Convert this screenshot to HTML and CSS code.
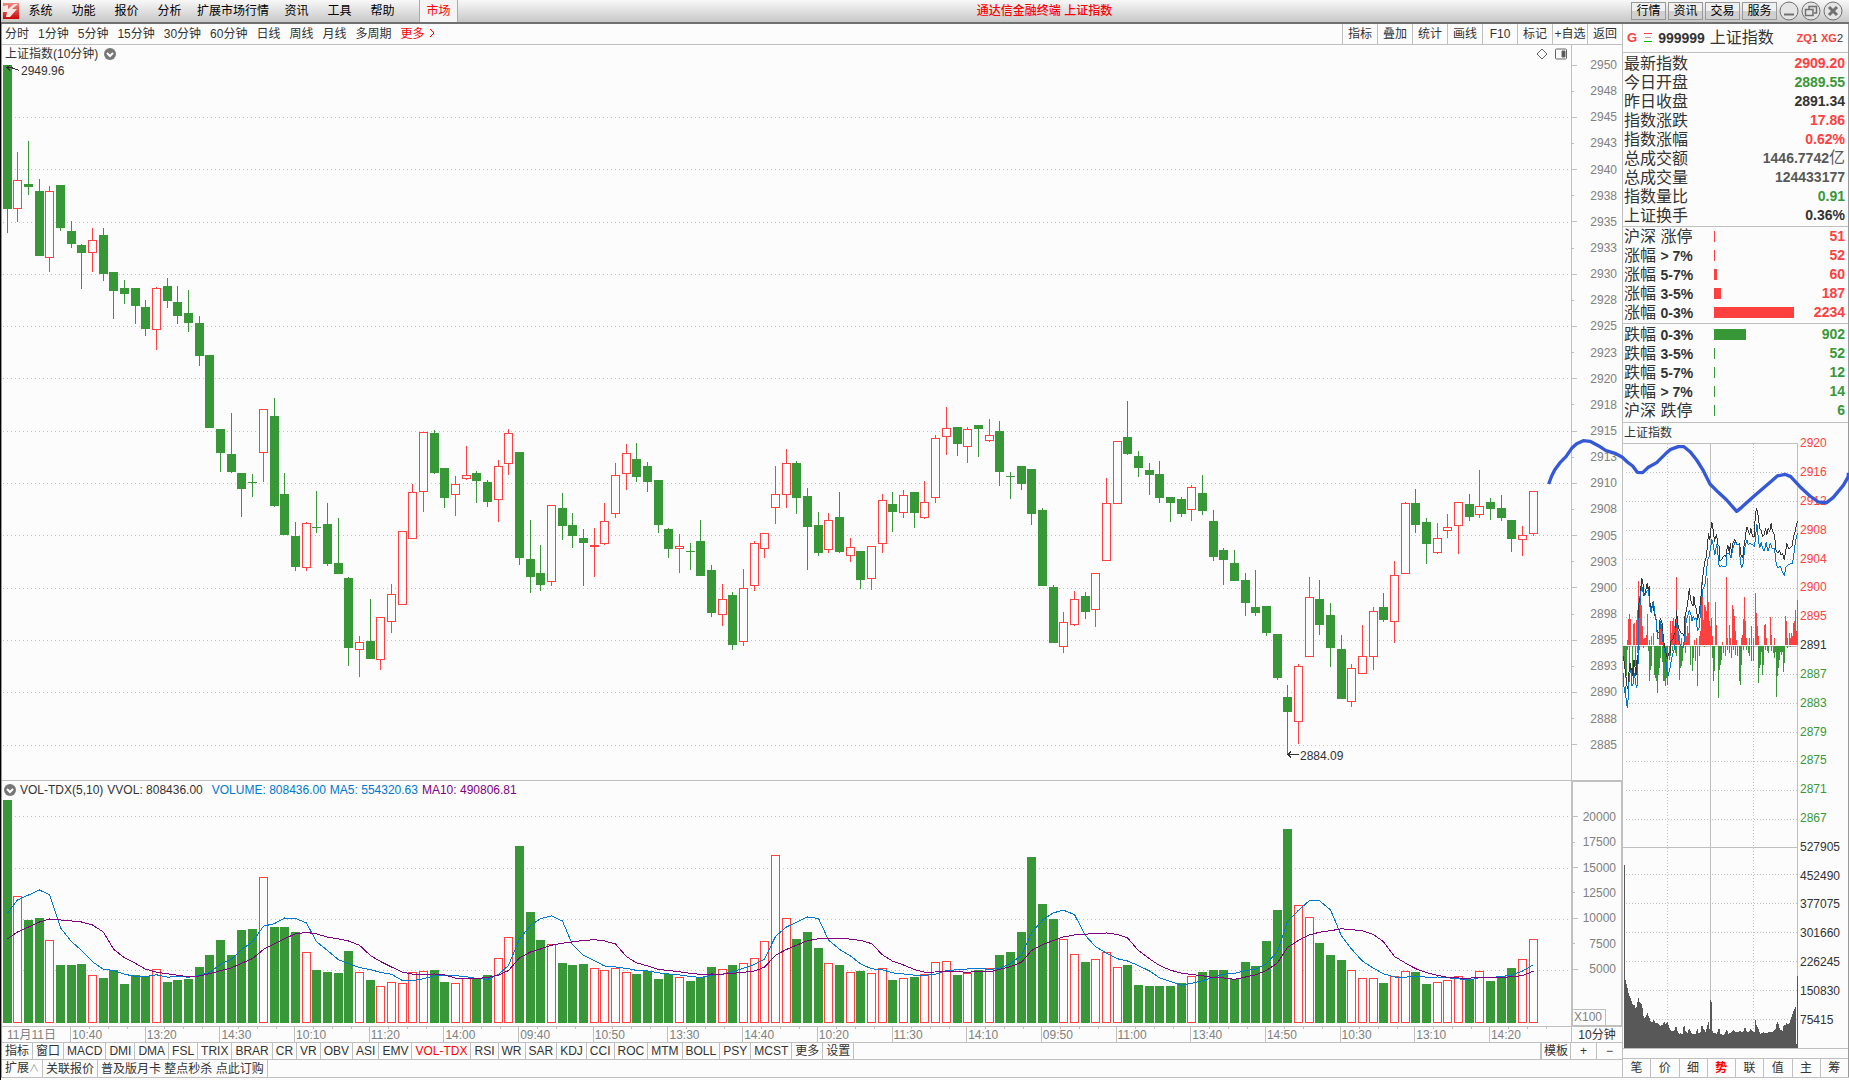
FILE: index.html
```
<!DOCTYPE html>
<html lang="zh-CN">
<head>
  <meta charset="UTF-8">
  <meta name="viewport" content="width=device-width, initial-scale=1.0">
  <title>通达信金融终端 上证指数</title>
  <link rel="stylesheet" href="styles.css">
</head>
<body>
<header class="menubar">
  <svg class="logo" viewBox="0 0 16 16">
    <defs>
      <linearGradient id="logoRed" x1="0" y1="0" x2="0" y2="1">
        <stop offset="0" stop-color="#f08a80"/>
        <stop offset="1" stop-color="#c80808"/>
      </linearGradient>
    </defs>
    <rect width="16" height="16" fill="url(#logoRed)"/>
    <path d="M0 3 L5 2 L5 6 L11 1 L15 1 L9 6 L14 6 L7 14 L3 14 L4 9 L0 9 Z" fill="#f3e4e2"/>
  </svg>
  <nav class="menu">
    <button>系统</button>
    <button>功能</button>
    <button>报价</button>
    <button>分析</button>
    <button>扩展市场行情</button>
    <button>资讯</button>
    <button>工具</button>
    <button>帮助</button>
    <button class="market">市场</button>
  </nav>
  <h1>通达信金融终端 上证指数</h1>
  <div class="window-tools">
    <button class="tool">行情</button>
    <button class="tool">资讯</button>
    <button class="tool">交易</button>
    <button class="tool">服务</button>
    <button class="round" aria-label="最小化"><svg viewBox="0 0 20 20"><circle cx="10" cy="10" r="9"/><path d="M5 13.5h10" stroke-width="2"/></svg></button>
    <button class="round" aria-label="还原"><svg viewBox="0 0 20 20"><circle cx="10" cy="10" r="9"/><path d="M8 8V5.5h7.5V12H13M4.5 8.500h7.500v6h-7.500z" stroke-width="1.500"/></svg></button>
    <button class="round" aria-label="关闭"><svg viewBox="0 0 20 20"><circle cx="10" cy="10" r="9"/><path d="M6 6l8 8M14 6l-8 8" stroke-width="3"/></svg></button>
  </div>
</header>

<main class="workspace">
  <section class="chart-side">
    <div class="period-bar">
      <div class="periods">
        <button>分时</button>
        <button>1分钟</button>
        <button>5分钟</button>
        <button>15分钟</button>
        <button>30分钟</button>
        <button>60分钟</button>
        <button>日线</button>
        <button>周线</button>
        <button>月线</button>
        <button>多周期</button>
        <button class="more">更多<svg viewBox="0 0 6 10"><path d="M1 1l4 4-4 4"/></svg></button>
      </div>
      <div class="period-tools">
        <button>指标</button>
        <button>叠加</button>
        <button>统计</button>
        <button>画线</button>
        <button>F10</button>
        <button>标记</button>
        <button>+自选</button>
        <button>返回</button>
      </div>
    </div>

    <div class="charts">
      <div class="plots">
        <div class="plot-head">
          <span>上证指数(10分钟)</span>
          <svg class="fold" viewBox="0 0 12 12"><circle cx="6" cy="6" r="6"/><path d="M3 5l3 3 3-3"/></svg>
          <svg class="corner" viewBox="0 0 32 12">
            <path d="M6 1l5 5-5 5-5-5z"/>
            <rect x="19.500" y="1" width="11" height="10" rx="1"/>
            <path d="M26 3h3v6h-3z" fill="#555"/>
          </svg>
        </div>
        <svg class="price-plot" id="pricePlot" viewBox="2 63 1569 717" preserveAspectRatio="none"></svg>
        <div class="plot-head vol-head">
          <svg class="fold" viewBox="0 0 12 12"><circle cx="6" cy="6" r="6"/><path d="M3 5l3 3 3-3"/></svg>
          <span>VOL-TDX(5,10)</span>
          <span class="vvol">VVOL: 808436.00</span>
          <span class="blue">VOLUME: 808436.00</span>
          <span class="blue">MA5: 554320.63</span>
          <span class="purple">MA10: 490806.81</span>
        </div>
        <svg class="vol-plot" id="volPlot" viewBox="2 798 1569 228" preserveAspectRatio="none"></svg>
      </div>
      <div class="axis">
        <ul class="axis-price" id="priceAxis"></ul>
        <div class="axis-vol">
          <ul id="volAxis"></ul>
          <span class="unit">X100</span>
        </div>
      </div>
    </div>

    <div class="time-row">
      <ol class="times" id="times"></ol>
      <span class="period-now">10分钟</span>
    </div>

    <div class="tab-row">
      <div class="tabs">
        <button>指标</button><button>窗口</button><button>MACD</button><button>DMI</button><button>DMA</button><button>FSL</button><button>TRIX</button><button>BRAR</button><button>CR</button><button>VR</button><button>OBV</button><button>ASI</button><button>EMV</button><button class="on">VOL-TDX</button><button>RSI</button><button>WR</button><button>SAR</button><button>KDJ</button><button>CCI</button><button>ROC</button><button>MTM</button><button>BOLL</button><button>PSY</button><button>MCST</button><button>更多</button><button>设置</button>
      </div>
      <div class="zoom">
        <button class="tpl">模板</button><button>+</button><button>−</button>
      </div>
    </div>
    <div class="tab-row link-row">
      <div class="tabs">
        <button>扩展<small>∧</small></button><button>关联报价</button><button>普及版月卡 整点秒杀 点此订购</button>
      </div>
    </div>
  </section>

  <aside class="quote-side">
    <h2 class="quote-title">
      <b class="flag">G</b>
      <svg viewBox="0 0 8 10"><path d="M0 .5h8" stroke="#ff4040"/><path d="M1 4.500h6" stroke="#aaa"/><path d="M0 8.500h8" stroke="#00c000"/></svg>
      <b class="code">999999</b>
      <span class="name">上证指数</span>
      <span class="marks"><b>ZQ</b>1 <b>XG</b>2</span>
    </h2>
    <table class="quote">
      <tr><th>最新指数</th><td class="up">2909.20</td></tr>
      <tr><th>今日开盘</th><td class="down">2889.55</td></tr>
      <tr><th>昨日收盘</th><td>2891.34</td></tr>
      <tr><th>指数涨跌</th><td class="up">17.86</td></tr>
      <tr><th>指数涨幅</th><td class="up">0.62%</td></tr>
      <tr><th>总成交额</th><td class="dim">1446.7742<span>亿</span></td></tr>
      <tr><th>总成交量</th><td class="dim">124433177</td></tr>
      <tr><th>指数量比</th><td class="down">0.91</td></tr>
      <tr><th>上证换手</th><td>0.36%</td></tr>
    </table>
    <table class="quote spread up">
      <tr><th>沪深 涨停</th><td><i style="width:1px"></i></td><td>51</td></tr>
      <tr><th>涨幅 <b>&gt; 7%</b></th><td><i style="width:1px"></i></td><td>52</td></tr>
      <tr><th>涨幅 <b>5-7%</b></th><td><i style="width:3px"></i></td><td>60</td></tr>
      <tr><th>涨幅 <b>3-5%</b></th><td><i style="width:7px"></i></td><td>187</td></tr>
      <tr><th>涨幅 <b>0-3%</b></th><td><i style="width:80px"></i></td><td>2234</td></tr>
    </table>
    <table class="quote spread down">
      <tr><th>跌幅 <b>0-3%</b></th><td><i style="width:32px"></i></td><td>902</td></tr>
      <tr><th>跌幅 <b>3-5%</b></th><td><i style="width:1px"></i></td><td>52</td></tr>
      <tr><th>跌幅 <b>5-7%</b></th><td><i style="width:1px"></i></td><td>12</td></tr>
      <tr><th>跌幅 <b>&gt; 7%</b></th><td><i style="width:1px"></i></td><td>14</td></tr>
      <tr><th>沪深 跌停</th><td><i style="width:1px"></i></td><td>6</td></tr>
    </table>
    <div class="mini">
      <div class="mini-main">
        <h3>上证指数</h3>
        <svg id="miniPlot" viewBox="246 69 528 1818" preserveAspectRatio="none"></svg>
      </div>
      <ul class="mini-axis" id="miniAxis"></ul>
    </div>
    <div class="quote-tabs">
      <button>笔</button><button>价</button><button>细</button><button class="on">势</button><button>联</button><button>值</button><button>主</button><button>筹</button>
    </div>
  </aside>

  <svg class="pen" viewBox="0 0 309 110">
    <polyline transform="scale(.3333)" points="26,192 35,168 44,150 60,128 78,110 95,85 110,71 130,62 150,64 175,77 198,92 225,100 247,112 262,126 278,138 292,157 308,158 325,142 350,128 375,103 392,88 415,80 432,80 450,95 470,120 490,152 510,192 535,217 560,240 580,263 590,274 605,262 640,230 680,196 712,168 735,163 752,170 780,200 810,228 835,246 860,248 880,232 910,196 925,170 925,158"/>
  </svg>
</main>
<script src="chart.js"></script>
</body>
</html>
```
FILE: styles.css
```
* {
  box-sizing: border-box;
}
body {
  display: flex;
  flex-direction: column;
  height: 100vh;
  margin: 0;
  overflow: hidden;
  background-color: #fcfcfc;
  border-left: 1px solid #000;
  color: #333;
  font-family: "Liberation Sans", "Noto Sans CJK SC", sans-serif;
  font-size: 12px;
  line-height: 16px;
}
button {
  padding: 0;
  border: none;
  background: none;
  color: inherit;
  font: inherit;
  white-space: nowrap;
  cursor: pointer;
}
ul, ol, h1, h2, h3 {
  margin: 0;
  padding: 0;
  list-style: none;
  font-size: 12px;
  font-weight: normal;
}

/* Menu bar */
.menubar {
  display: flex;
  flex: none;
  align-items: center;
  height: 24px;
  padding: 0 6px 0 2px;
  background: linear-gradient(#f8f8f8, #c8c8c8);
  border-bottom: 2px solid #707070;
  color: #000;
}
.logo {
  width: 16px;
  height: 16px;
}
.menu {
  display: flex;
  flex: none;
  align-self: stretch;
}
.menu button {
  min-width: 43px;
  padding: 0 6px;
}
.menu .market {
  min-width: 39px;
  margin-left: 15px;
  border: solid #aaa;
  border-width: 0 1px;
  background-color: #f4f4f4;
  color: #f00;
}
.menubar h1 {
  flex: 1;
  color: #f00;
  font-weight: 500;
  text-align: center;
}
.window-tools {
  display: flex;
  flex: none;
  align-items: center;
  gap: 2px;
}
.tool {
  width: 35px;
  height: 18px;
  border: 1px solid #999;
  background: linear-gradient(#f0f0f0 50%, #d0d0d0 50%);
  line-height: 16px;
}
.round {
  width: 20px;
  height: 20px;
}
.round svg {
  display: block;
  fill: #e4e4e4;
  stroke: #707070;
}

.workspace {
  position: relative;
  display: flex;
  flex: 1;
  min-height: 0;
  margin-bottom: 2px;
  border-left: 1px solid #999;
  border-bottom: 1px solid #c0c0c0;
}
.chart-side {
  display: flex;
  flex: 1;
  flex-direction: column;
  min-width: 0;
}

/* Period bar */
.period-bar {
  display: flex;
  flex: none;
  justify-content: space-between;
  height: 21px;
  border-bottom: 1px solid #c0c0c0;
}
.periods {
  display: flex;
  gap: 9px;
  padding-left: 3px;
}
.more {
  color: #f00;
}
.more svg {
  width: 6px;
  height: 10px;
  margin-left: 4px;
  fill: none;
  stroke: #f00;
}
.period-tools {
  display: flex;
}
.period-tools button {
  width: 35px;
  border-left: 1px solid #c0c0c0;
}

/* Charts */
.charts {
  display: flex;
  flex: 1;
  min-height: 0;
}
.plots {
  display: flex;
  flex: 1;
  flex-direction: column;
  min-width: 0;
}
.plot-head {
  display: flex;
  flex: none;
  align-items: center;
  gap: 6px;
  height: 18px;
  padding: 0 3px;
}
.vol-head {
  gap: 4px;
  padding: 0 2px;
  border-top: 1px solid #c0c0c0;
}
.vvol {
  margin-right: 5px;
}
.fold {
  width: 12px;
  height: 12px;
  fill: #777;
}
.fold path {
  fill: none;
  stroke: #fff;
  stroke-width: 2;
}
.corner {
  width: 32px;
  height: 12px;
  margin-left: auto;
  fill: none;
  stroke: #666;
}
.price-plot {
  flex: 717 1 0;
  width: 100%;
  min-height: 0;
  shape-rendering: crispEdges;
}
.vol-plot {
  flex: 228 1 0;
  width: 100%;
  min-height: 0;
  shape-rendering: crispEdges;
}
.price-plot text {
  fill: #333;
}
.grid {
  stroke: #c0c0c0;
  stroke-dasharray: 1 3;
}
.arrow {
  fill: none;
  stroke: #333;
}
.blue {
  color: #0078d0;
}
.purple {
  color: #800080;
}
.axis {
  display: grid;
  grid-template-rows: minmax(0, 735fr) minmax(0, 246fr);
  width: 51px;
  color: #808080;
}
.axis ul {
  display: flex;
  flex: 1;
  flex-direction: column;
}
.axis li {
  position: relative;
  display: flex;
  flex: 1;
  align-items: center;
  justify-content: flex-end;
  padding-right: 5px;
}
.axis li::before {
  position: absolute;
  left: 0;
  width: 5px;
  height: 1px;
  background-color: #c0c0c0;
  content: "";
}
.axis li:nth-child(even)::before {
  width: 2px;
}
.axis .axis-price {
  padding: 7px 0 22px;
  border-left: 1px solid #c0c0c0;
}
.axis-vol {
  display: flex;
  flex-direction: column;
  padding-top: 22px;
  border: 2px solid #c0c0c0;
  border-width: 2px 1px 1px 2px;
}
.unit {
  align-self: flex-start;
  height: 16px;
  margin-top: 27px;
  padding: 0 3px 0 1px;
  border: solid #c0c0c0;
  border-width: 1px 1px 0 0;
  line-height: 15px;
}

/* Time axis */
.time-row {
  display: flex;
  flex: none;
  height: 16px;
  border-top: 1px solid #c0c0c0;
}
.times {
  display: grid;
  flex: 1;
  grid-template-columns: 680fr repeat(19, 746fr) 820fr;
  color: #808080;
}
.times li {
  padding-left: 1px;
  border-left: 1px solid #c0c0c0;
  background: repeating-linear-gradient(90deg, transparent 0 18px, #c0c0c0 18px 19px) 0 0 / 57px 2px no-repeat;
  white-space: nowrap;
}
.times li:first-child {
  padding-left: 5px;
  border-left: none;
  background: none;
}
.period-now {
  width: 51px;
  border-left: 1px solid #c0c0c0;
  text-align: center;
}

/* Bottom tabs */
.tab-row {
  display: flex;
  flex: none;
  justify-content: space-between;
  height: 17px;
  border-top: 1px solid #c0c0c0;
}
.link-row {
  height: 18px;
}
.tabs {
  display: flex;
}
.tabs button {
  padding: 0 3px;
  border-right: 1px solid #c0c0c0;
}
.link-row small {
  color: #999;
  font-size: 10px;
}
.zoom {
  display: flex;
}
.zoom button {
  width: 26px;
  border-left: 1px solid #c0c0c0;
}
.zoom .tpl {
  width: 30px;
  border-left-width: 2px;
}
.tabs .on, .quote-tabs .on {
  color: #f00;
}
.quote-tabs .on {
  font-weight: bold;
}

/* Quote panel */
.quote-side {
  display: flex;
  flex: none;
  flex-direction: column;
  width: 227px;
  border: solid #c0c0c0;
  border-width: 0 1px;
  border-right-color: #999;
}
.quote-title {
  display: flex;
  flex: none;
  align-items: center;
  gap: 5px;
  height: 29px;
  padding: 0 5px 0 4px;
  border-bottom: 1px solid #c0c0c0;
}
.quote-title svg {
  width: 8px;
  height: 10px;
  margin: 0 1px 0 2px;
}
.flag {
  color: #ff4040;
  font-size: 13px;
}
.code {
  font-size: 14px;
}
.name {
  font-size: 16px;
}
.marks {
  margin-left: auto;
  font-size: 11px;
}
.marks b {
  color: #ff4040;
}
.quote {
  width: 100%;
  border-spacing: 0;
  border-bottom: 1px solid #c0c0c0;
}
.quote tr {
  height: 19px;
}
.quote th {
  width: 91px;
  padding: 0 0 0 1px;
  font-size: 16px;
  font-weight: normal;
  line-height: 19px;
  text-align: left;
  white-space: nowrap;
}
.quote td {
  padding: 0 3px 0 0;
  font-size: 14px;
  font-weight: bold;
  line-height: 19px;
  text-align: right;
}
.quote th b {
  font-size: 14px;
  line-height: 1;
}
.quote td:nth-child(2):not(:last-child) {
  text-align: left;
}
.quote i {
  display: block;
  height: 11px;
  background-color: currentColor;
}
.quote td span {
  font-size: 16px;
  font-weight: normal;
  line-height: 1;
}
.up td {
  color: #ff4040;
}
.down td {
  color: #389838;
}
.quote .up {
  color: #ff4040;
}
.quote .down {
  color: #389838;
}
.quote .dim {
  color: #585858;
}
.quote:first-of-type {
  padding: 1px 0;
}
.spread.up {
  padding-bottom: 1px;
}
.spread.down {
  padding: 1px 0 2px;
}

/* Intraday chart */
.mini {
  display: flex;
  flex: 1;
  min-height: 0;
  border-bottom: 1px solid #c0c0c0;
}
.mini-main {
  display: flex;
  flex: 1;
  flex-direction: column;
}
.mini h3 {
  flex: none;
  height: 20px;
  padding-left: 1px;
  line-height: 20px;
}
.mini-main svg {
  flex: 1;
  width: 100%;
  min-height: 0;
  shape-rendering: crispEdges;
}
.mini-axis {
  display: flex;
  flex-direction: column;
  width: 50px;
  padding: 6px 0 14px 2px;
}
.mini-axis li {
  display: flex;
  flex: 1;
  align-items: center;
}
.mini-axis .red {
  color: #ff4040;
}
.mini-axis .green {
  color: #389838;
}
.quote-tabs {
  display: flex;
  flex: none;
  height: 19px;
  margin-top: 9px;
  border-top: 1px solid #c0c0c0;
}
.quote-tabs button {
  flex: 1;
  border-right: 1px solid #c0c0c0;
}
.quote-tabs button:last-child {
  border-right: none;
}

/* Hand-drawn forecast line */
.pen {
  position: absolute;
  top: 396px;
  right: 0;
  width: 309px;
  height: 110px;
  pointer-events: none;
}
.pen polyline {
  fill: none;
  stroke: #3458d8;
  stroke-width: 10;
  stroke-linejoin: round;
}
```
FILE: chart.js
```
const RED = '#ff4040';
const GREEN = '#389838';
const PAPER = '#fcfcfc';

// one bar: up, high, top, bottom, low, volume top
const bars = [
  [0,65,65,209,233,800],[1,152,180,208,222,896],[0,141,184,187,195,920],[0,179,191,256,256,918],[1,186,191,257,272,940],[0,185,185,228,231,965],
  [0,221,231,244,248,965],[0,244,245,253,289,964],[1,228,240,252,272,975],[0,228,235,274,281,978],[0,272,272,291,319,970],[0,280,288,294,304,984],
  [0,288,288,306,324,975],[0,300,307,329,336,976],[1,287,288,329,350,969],[0,278,286,301,308,982],[0,286,302,316,324,980],[0,290,313,323,332,979],
  [0,316,323,356,366,967],[0,355,355,428,428,955],[0,429,429,453,472,940],[0,413,454,472,473,955],[0,473,473,489,517,930],[0,474,482,483,497,929],
  [1,409,409,452,482,877],[0,398,416,506,507,927],[0,473,494,535,535,927],[0,522,536,567,571,932],[1,522,523,567,571,952],[0,491,527,528,533,970],
  [0,503,524,564,566,972],[0,518,563,574,574,973],[0,577,578,648,666,951],[1,636,642,649,677,972],[0,599,641,659,659,980],[1,617,617,659,670,986],
  [1,584,594,621,633,982],[1,531,531,604,605,983],[1,484,492,538,539,972],[1,432,432,491,512,971],[0,430,433,473,474,970],[0,468,468,498,508,982],
  [1,476,484,494,516,983],[1,446,475,478,480,978],[0,471,473,481,503,979],[0,480,482,502,507,975],[1,460,466,499,522,958],[1,429,433,463,475,937],
  [0,452,452,558,565,846],[0,520,559,577,593,912],[0,545,573,585,591,940],[1,505,505,581,586,944],[0,493,508,526,540,963],[0,513,525,536,548,965],
  [0,529,538,543,586,964],[1,528,545,546,577,968],[1,503,521,543,545,970],[1,463,475,513,518,968],[1,444,453,473,490,972],[0,443,459,477,482,974],
  [0,462,466,482,492,971],[0,480,480,525,533,979],[0,528,529,549,558,974],[1,534,546,548,573,977],[0,543,551,552,570,981],[0,520,541,576,576,977],
  [0,565,570,613,617,967],[1,584,599,614,626,969],[0,592,595,645,650,965],[1,569,588,641,646,963],[1,541,543,585,591,958],[1,533,533,548,558,941],
  [1,466,494,507,524,855],[1,449,463,494,508,918],[0,461,463,498,514,939],[0,488,496,527,570,932],[0,512,525,553,556,948],[1,513,520,549,553,963],
  [0,492,517,552,553,965],[1,538,547,555,562,972],[0,551,551,580,589,971],[1,546,546,578,590,973],[1,494,500,543,553,968],[0,492,504,512,532,980],
  [1,490,495,512,518,978],[0,492,492,513,528,977],[1,481,502,517,519,974],[1,435,438,497,503,962],[1,407,428,436,455,961],[0,427,427,444,456,975],
  [1,427,429,446,463,973],[0,425,425,429,457,970],[1,419,435,440,442,968],[0,421,431,472,486,955],[0,472,476,477,499,952],[0,466,466,484,490,932],
  [0,469,469,514,525,857],[0,508,510,586,586,904],[0,585,587,643,643,919],[1,612,622,646,653,939],[1,591,599,624,626,954],[0,592,596,612,619,962],
  [1,573,573,609,627,959],[1,478,503,560,561,952],[1,441,441,503,504,967],[0,401,437,454,455,965],[0,451,456,468,477,985],[0,463,470,475,495,986],
  [0,461,474,498,503,986],[0,497,497,503,522,986],[0,497,499,514,517,983],[1,485,487,509,521,976],[0,475,493,511,515,972],[0,510,521,557,561,970],
  [0,548,550,560,585,970],[0,550,563,581,581,979],[0,573,580,603,616,962],[0,570,607,613,616,966],[0,606,606,633,636,941],[0,634,634,678,680,910],
  [0,685,697,712,755,829],[1,664,666,721,744,905],[1,577,597,656,657,917],[0,580,599,625,635,943],[0,603,615,648,667,955],[0,635,649,699,699,960],
  [1,664,668,701,707,970],[1,625,656,673,674,978],[1,607,611,656,670,978],[0,593,607,620,622,983],[1,561,575,621,643,976],[1,502,503,573,574,971],
  [0,489,503,525,533,972],[0,518,522,544,564,984],[1,523,538,552,554,982],[1,514,527,530,538,980],[1,502,502,525,554,976],[0,494,504,517,521,979],
  [1,470,506,514,518,971],[0,498,502,509,520,981],[0,495,508,518,521,976],[0,520,520,539,552,968],[1,526,535,539,556,959],[1,491,491,533,536,939]
];
const barLeft = i => Math.floor(3.2 + 10.672 * i);

const rect = (x, y, w, h, fill) => `<rect x="${x}" y="${y}" width="${w}" height="${h}" fill="${fill}"/>`;
const box = (x, y, w, h) => `<rect x="${x + .5}" y="${y + .5}" width="${w - 1}" height="${h}" fill="${PAPER}" stroke="${RED}"/>`;
const line = (x1, y1, x2, y2, cls) => `<line class="${cls}" x1="${x1}" y1="${y1}" x2="${x2}" y2="${y2}"/>`;

function drawPrice() {
  let out = '';
  [117, 169, 222, 274, 326, 378, 431, 483, 535, 588, 640, 692, 745].forEach(y => {
    out += line(3, y + .5, 1569, y + .5, 'grid');
  });
  bars.forEach(([up, high, top, bottom, low], i) => {
    const x = barLeft(i);
    out += rect(x + 4, high, 1, low - high, up ? RED : GREEN);
    out += up ? box(x, top, 9, bottom - top) : rect(x, top, 9, bottom - top, GREEN);
  });
  out += '<path class="arrow" d="M7 67.5h4l3 1 5 2M10 65l-3 2.500 3 3"/><text x="21" y="75">2949.96</text>';
  out += '<path class="arrow" d="M1299 754.5h-11M1291 751.5l-3 3 3 3"/><text x="1300" y="760">2884.09</text>';
  document.getElementById('pricePlot').innerHTML = out;
}

// moving average of the last n volume tops; the first points come from earlier days
function average(n, seed) {
  return bars.map((bar, i) => {
    if (i < seed.length) return seed[i];
    return bars.slice(i - n + 1, i + 1).reduce((sum, b) => sum + b[5], 0) / n;
  }).map((y, i) => `${barLeft(i) + 4.5},${y.toFixed(1)}`).join(' ');
}

function drawVolume() {
  let out = '';
  [816, 868, 919, 970].forEach(y => {
    out += line(15, y + .5, 1569, y + .5, 'grid');
  });
  bars.forEach((bar, i) => {
    const x = barLeft(i);
    out += bar[0] ? box(x, bar[5], 9, 1022 - bar[5]) : rect(x, bar[5], 9, 1023 - bar[5], GREEN);
  });
  out += `<polyline fill="none" stroke="#0078d0" points="${average(5, [913, 900, 895, 890])}"/>`;
  out += `<polyline fill="none" stroke="#800080" points="${average(10, [939, 932, 927, 922, 919, 920, 921, 922, 925])}"/>`;
  document.getElementById('volPlot').innerHTML = out;
}

function drawMini() {
  const reds = '260,660 263,597 266,583 269,597 278,613 281,610 287,600 290,570 293,484 296,530 299,530 302,555 305,620 308,658 311,655 314,655 317,645 320,583 325,660 331,650 338,640 355,640 358,610 361,630 364,655 388,605 391,640 394,605 397,595 400,620 403,640 406,472 409,600 412,650 415,645 421,655 430,610 433,585 436,650 439,620 442,640 445,590 460,660 466,655 475,650 478,635 481,487 484,530 487,600 490,555 493,562 496,575 499,475 502,548 505,605 508,620 511,508 514,595 517,650 526,547 529,615 547,668 559,472 562,655 568,615 571,655 577,555 580,568 583,590 586,635 589,660 604,655 607,645 610,597 613,532 616,605 619,655 628,655 634,620 640,655 646,520 649,580 652,620 655,650 673,615 676,612 679,655 691,592 694,645 703,655 736,590 739,605 742,655 748,640 751,655 754,640 757,650 760,610 763,605 766,570 769,635 772,540';
  const greens = '251,740 254,775 257,770 260,690 266,740 275,745 284,740 290,700 296,690 308,685 322,695 325,785 328,750 331,740 340,765 343,775 346,785 349,820 352,765 355,745 358,715 364,720 367,785 370,785 373,800 376,775 379,795 385,720 388,710 394,695 403,700 406,710 415,782 418,745 421,740 424,725 433,700 448,735 454,755 457,715 463,725 469,800 475,710 490,683 517,715 520,785 523,755 535,835 538,750 541,735 544,720 550,700 556,710 562,690 568,700 574,715 580,690 586,705 592,710 598,785 601,795 604,735 610,690 619,690 625,700 628,710 634,725 640,725 655,790 658,745 661,735 667,765 670,735 676,690 682,695 685,700 694,695 700,700 703,715 709,832 712,770 715,745 718,720 724,705 730,757 733,730 742,685 751,683';
  const price = '247,710 251,740 255,770 258,800 262,810 264,760 267,730 270,750 273,745 276,770 279,720 282,740 285,770 288,720 291,740 292,620 294,550 298,530 300,500 303,476 307,495 309,530 314,515 319,490 322,510 325,500 328,560 331,580 334,555 337,545 340,580 346,600 349,635 355,640 358,595 364,610 368,660 372,680 376,700 380,718 384,700 388,700 390,665 396,660 400,645 404,640 407,572 411,610 414,625 420,640 427,642 430,650 433,590 438,570 441,550 446,505 449,535 453,550 457,560 460,530 464,560 468,570 471,600 476,580 480,545 484,500 488,460 492,430 497,412 500,385 504,340 508,360 511,330 514,305 518,330 522,365 528,342 532,375 537,380 538,425 543,420 548,410 553,408 556,410 562,375 567,400 570,370 573,400 578,370 583,357 588,368 593,375 598,372 602,405 607,415 611,380 615,350 620,320 624,335 628,345 632,325 637,350 642,350 645,290 649,263 654,290 658,325 662,330 667,350 672,345 676,325 680,345 684,325 689,335 693,310 697,335 703,345 708,395 713,400 718,390 722,405 727,400 732,420 737,395 740,370 745,385 750,385 755,380 760,350 765,335 769,315 773,303';
  const lead = '247,760 250,820 253,800 256,850 260,865 263,800 267,760 270,750 273,800 276,795 280,760 284,790 287,805 290,790 292,700 294,600 297,560 300,515 303,500 307,520 311,530 318,515 323,510 327,560 331,580 335,555 338,545 342,580 346,605 350,655 356,655 359,605 363,625 367,670 373,700 378,750 382,768 388,745 392,720 397,700 402,685 407,610 411,625 415,665 420,680 427,685 432,655 437,600 443,585 446,570 450,580 454,605 458,590 462,600 468,595 470,635 476,625 481,560 487,510 493,495 497,465 501,420 506,410 510,385 514,357 519,380 523,405 529,372 532,400 536,440 543,438 550,440 557,440 560,400 567,400 572,415 578,385 584,367 590,375 596,375 600,425 604,445 609,430 613,385 620,360 624,375 630,370 637,375 643,380 647,340 650,313 655,360 658,385 663,365 668,385 672,395 678,365 684,395 690,370 696,385 703,385 708,430 713,445 720,440 727,455 733,468 738,440 745,433 757,432 762,400 767,360 773,340';
  const volume = '248,376 252,376 252,714 255,728 258,738 261,755 264,768 270,780 275,795 282,800 285,812 289,795 292,775 296,790 303,797 306,815 309,840 314,833 320,822 324,833 329,845 333,852 338,843 343,850 350,853 360,860 366,857 370,847 375,855 380,848 385,862 390,876 398,877 403,873 406,856 410,875 415,886 420,882 426,886 430,853 434,875 440,882 446,868 452,882 460,886 466,885 470,867 474,884 480,880 484,855 488,867 495,880 500,865 503,841 507,870 510,783 513,783 514,875 520,882 530,884 536,862 540,886 552,887 560,870 563,885 570,882 580,873 588,880 595,878 600,876 605,882 610,875 614,863 618,875 625,880 630,870 640,878 645,878 646,835 649,860 653,866 660,885 668,880 680,882 690,877 697,880 702,873 708,870 710,843 715,855 720,872 728,875 731,855 735,862 738,850 743,855 748,852 752,840 756,830 760,818 764,808 768,801 768,928 248,928';
  const split = s => s.split(' ').map(p => p.split(',').map(Number));

  let out = '<g stroke="#c0c0c0" stroke-width="3">';
  [156, 244, 331, 418, 505, 592, 763, 850, 937, 1024, 1111, 1198, 1366, 1453, 1540, 1627, 1714, 1801].forEach(y => {
    out += `<path stroke-dasharray="3 6" d="M255 ${y + 1}H772"/>`;
  });
  out += '<path stroke-dasharray="3 6" d="M379.500 72V1888M640.500 72V1888"/>';
  out += '<path d="M246 70.500H774M508.500 70V1888M772.500 70V1888M246 679.500H774M246 1285.500H774"/></g>';
  split(reds).forEach(([x, y]) => { out += rect(x - 1, y, 3, 676 - y, RED); });
  split(greens).forEach(([x, y]) => { out += rect(x - 1, 678, 3, y - 678, GREEN); });
  // fill between neighbouring green bars in the busy stretches
  out += `<g fill="${GREEN}"><path d="M247 678h12v30h-12zM325 678h6v50h-6zM340 678h15v60h-15zM364 678h18v50h-18zM415 678h9v40h-9zM535 678h9v40h-9zM655 678h15v20h-15zM700 678h32v20h-32z"/></g>`;
  out += `<polyline fill="none" stroke="#383838" stroke-width="3" points="${price}"/>`;
  out += `<polyline fill="none" stroke="#0078d0" stroke-width="3" points="${lead}"/>`;
  out += `<g transform="translate(0 960)" fill="#585858"><polygon points="${volume}"/><path d="M768 914h3V712h3v216h-6z"/></g>`;
  document.getElementById('miniPlot').innerHTML = out;
}

function fillList(id, items) {
  document.getElementById(id).innerHTML = items.map(([text, cls]) => `<li class="${cls || ''}">${text}</li>`).join('');
}

drawPrice();
drawVolume();
drawMini();

const prices = [];
for (let p = 2950; p >= 2885; p -= 2.5) prices.push([Math.round(p)]);
fillList('priceAxis', prices);
fillList('volAxis', [20000, 17500, 15000, 12500, 10000, 7500, 5000].map(v => [v]));
fillList('times', ['11月11日', '10:40', '13:20', '14:30', '10:10', '11:20', '14:00', '09:40', '10:50', '13:30', '14:40',
  '10:20', '11:30', '14:10', '09:50', '11:00', '13:40', '14:50', '10:30', '13:10', '14:20'].map(t => [t]));
fillList('miniAxis', [
  ...[2920, 2916, 2912, 2908, 2904, 2900, 2895].map(v => [v, 'red']),
  [2891],
  ...[2887, 2883, 2879, 2875, 2871, 2867].map(v => [v, 'green']),
  ...[527905, 452490, 377075, 301660, 226245, 150830, 75415].map(v => [v])
]);
```
